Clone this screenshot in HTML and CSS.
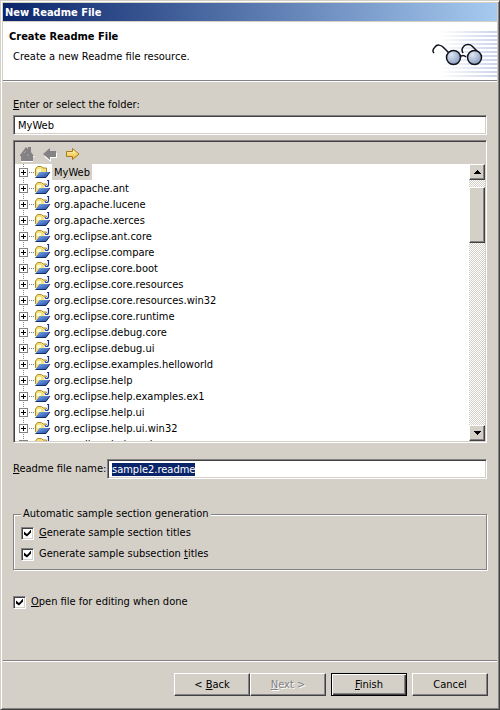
FILE: index.html
```html
<!DOCTYPE html>
<html lang="en">
<head>
<meta charset="utf-8">
<title>New Readme File</title>
<link rel="stylesheet" href="styles.css">
</head>
<body>
<svg class="defs" aria-hidden="true">
  <defs>
    <linearGradient id="blue" x2="1" y2="1">
      <stop offset="0" stop-color="#7fb0ee"/>
      <stop offset="1" stop-color="#1c4296"/>
    </linearGradient>
    <symbol id="folder" viewBox="0 0 17 16">
      <path d="M1.500 12V5l2-2.500h4L9 4h3.500v4" fill="#f5e27c" stroke="#a88d2b"/>
      <path d="M3 5h4v3H3z" fill="#fffbd0"/>
      <path d="M5.500 8H16l-4 5.500H1.500z" fill="url(#blue)"/>
      <path d="M1.500 13.500H12L16 8" fill="none" stroke="#122e70"/>
    </symbol>
    <symbol id="java" viewBox="0 0 17 16">
      <path d="M14.500 0v4.500q0 2-2 2-1.500 0-1.500-1.500" fill="none" stroke="#fff" stroke-width="3"/>
      <path d="M13 .5h2M14.500 0v4.500q0 2-2 2-1.500 0-1.500-1.500" fill="none" stroke="#1d2e94" stroke-width="1.200"/>
    </symbol>
    <radialGradient id="lens" cx=".35" cy=".3" r=".8">
      <stop offset="0" stop-color="#dfe7f3"/>
      <stop offset="1" stop-color="#8295bc"/>
    </radialGradient>
    <linearGradient id="gold" x2="0" y2="1">
      <stop offset="0" stop-color="#fffbd0"/>
      <stop offset="1" stop-color="#f2b51c"/>
    </linearGradient>
  </defs>
</svg>
<main class="window">
  <div class="titlebar">New Readme File</div>
  <header class="banner">
    <div class="banner-text">
      <h1>Create Readme File</h1>
      <p>Create a new Readme file resource.</p>
    </div>
    <svg class="glasses" viewBox="0 0 68 58" aria-hidden="true">
      <defs>
        <linearGradient id="fade"><stop offset="0" stop-color="#ccd4e8" stop-opacity="0"/><stop offset="1" stop-color="#ccd4e8"/></linearGradient>
      </defs>
      <path d="M10 9h58v2H10zM10 13h58v2H10zM10 17h58v2H10zM10 21h58v2H10zM10 25h58v2H10zM10 29h58v2H10zM10 33h58v2H10zM10 37h58v2H10zM10 41h58v2H10zM10 45h58v2H10zM10 49h58v2H10zM10 53h58v2H10z" fill="url(#fade)"/>
      <g fill="none" stroke="#10131c" stroke-width="1.500">
        <path d="M5 31c-2-2-1-4 1-6 2-3 6-2 8 0l6 6M34 31c-2-3-1-5 1-7 2-2 6-2 8 0l5 5M31 35q3-3 6 0"/>
        <circle cx="24.500" cy="35.500" r="7" fill="url(#lens)"/>
        <circle cx="45.500" cy="35.500" r="7" fill="url(#lens)"/>
      </g>
    </svg>
  </header>
  <form class="content">
    <label class="folder-label" for="folder-name"><u>E</u>nter or select the folder:</label>
    <input class="field" id="folder-name" type="text" value="MyWeb">
    <section class="browser" aria-label="Folders">
      <div class="toolbar">
        <button type="button" aria-label="Home" disabled><svg viewBox="0 0 16 16"><path d="M2 10v6h12v-5h2L11 5V2" fill="#fff"/><path d="M1 9l6-8 2 2V1h3v5l3 4h-1v5H2v-5H1z" fill="#848284"/><path d="M5 7l2-2M8 9h2" fill="none" stroke="#aaa8a5"/></svg></button>
        <button type="button" aria-label="Back" disabled><svg viewBox="0 0 16 16"><path d="M3 10l5 4v-3h6V7" fill="none" stroke="#fff" stroke-width="2"/><path d="M1 8l7-6v3h6v6H8v3z" fill="#848284"/></svg></button>
        <button type="button" aria-label="Go into"><svg viewBox="0 0 16 16"><path d="M1.500 5.500h6v-3L14 8l-6.500 5.500v-3h-6z" fill="url(#gold)" stroke="#a67c16"/></svg></button>
      </div>
      <div class="tree-pane">
        <ul class="tree">
          <li class="selected"><button type="button" aria-label="Expand"></button><svg viewBox="0 0 17 16"><use href="#folder"/></svg><span>MyWeb</span></li>
          <li><button type="button" aria-label="Expand"></button><svg viewBox="0 0 17 16"><use href="#folder"/><use href="#java"/></svg><span>org.apache.ant</span></li>
          <li><button type="button" aria-label="Expand"></button><svg viewBox="0 0 17 16"><use href="#folder"/><use href="#java"/></svg><span>org.apache.lucene</span></li>
          <li><button type="button" aria-label="Expand"></button><svg viewBox="0 0 17 16"><use href="#folder"/><use href="#java"/></svg><span>org.apache.xerces</span></li>
          <li><button type="button" aria-label="Expand"></button><svg viewBox="0 0 17 16"><use href="#folder"/><use href="#java"/></svg><span>org.eclipse.ant.core</span></li>
          <li><button type="button" aria-label="Expand"></button><svg viewBox="0 0 17 16"><use href="#folder"/><use href="#java"/></svg><span>org.eclipse.compare</span></li>
          <li><button type="button" aria-label="Expand"></button><svg viewBox="0 0 17 16"><use href="#folder"/><use href="#java"/></svg><span>org.eclipse.core.boot</span></li>
          <li><button type="button" aria-label="Expand"></button><svg viewBox="0 0 17 16"><use href="#folder"/><use href="#java"/></svg><span>org.eclipse.core.resources</span></li>
          <li><button type="button" aria-label="Expand"></button><svg viewBox="0 0 17 16"><use href="#folder"/><use href="#java"/></svg><span>org.eclipse.core.resources.win32</span></li>
          <li><button type="button" aria-label="Expand"></button><svg viewBox="0 0 17 16"><use href="#folder"/><use href="#java"/></svg><span>org.eclipse.core.runtime</span></li>
          <li><button type="button" aria-label="Expand"></button><svg viewBox="0 0 17 16"><use href="#folder"/><use href="#java"/></svg><span>org.eclipse.debug.core</span></li>
          <li><button type="button" aria-label="Expand"></button><svg viewBox="0 0 17 16"><use href="#folder"/><use href="#java"/></svg><span>org.eclipse.debug.ui</span></li>
          <li><button type="button" aria-label="Expand"></button><svg viewBox="0 0 17 16"><use href="#folder"/><use href="#java"/></svg><span>org.eclipse.examples.helloworld</span></li>
          <li><button type="button" aria-label="Expand"></button><svg viewBox="0 0 17 16"><use href="#folder"/><use href="#java"/></svg><span>org.eclipse.help</span></li>
          <li><button type="button" aria-label="Expand"></button><svg viewBox="0 0 17 16"><use href="#folder"/><use href="#java"/></svg><span>org.eclipse.help.examples.ex1</span></li>
          <li><button type="button" aria-label="Expand"></button><svg viewBox="0 0 17 16"><use href="#folder"/><use href="#java"/></svg><span>org.eclipse.help.ui</span></li>
          <li><button type="button" aria-label="Expand"></button><svg viewBox="0 0 17 16"><use href="#folder"/><use href="#java"/></svg><span>org.eclipse.help.ui.win32</span></li>
          <li><button type="button" aria-label="Expand"></button><svg viewBox="0 0 17 16"><use href="#folder"/><use href="#java"/></svg><span>org.eclipse.help.webapp</span></li>
        </ul>
        <div class="scrollbar">
          <button type="button" class="raised" aria-label="Scroll up"><svg viewBox="0 0 7 4" shape-rendering="crispEdges"><path d="M3 0h1v1h1v1h1v1h1v1H0V3h1V2h1V1h1z"/></svg></button>
          <div class="track"><div class="thumb raised"></div></div>
          <button type="button" class="raised" aria-label="Scroll down"><svg viewBox="0 0 7 4" shape-rendering="crispEdges"><path d="M0 0h7v1H6v1H5v1H4v1H3V3H2V2H1V1H0z"/></svg></button>
        </div>
      </div>
    </section>
    <div class="file-row">
      <label for="file-name"><u>R</u>eadme file name:</label>
      <input class="field" id="file-name" type="text" value="sample2.readme" autofocus>
    </div>
    <fieldset>
      <legend>Automatic sample section generation</legend>
      <label class="check"><input type="checkbox" checked><span><u>G</u>enerate sample section titles</span></label>
      <label class="check"><input type="checkbox" checked><span>Generate sample subsection <u>t</u>itles</span></label>
    </fieldset>
    <label class="check"><input type="checkbox" checked><span><u>O</u>pen file for editing when done</span></label>
  </form>
  <footer class="actions">
    <div class="pair">
      <button type="button" class="raised">&lt; <u>B</u>ack</button>
      <button type="button" class="raised" disabled><u>N</u>ext &gt;</button>
    </div>
    <button type="button" class="raised default"><u>F</u>inish</button>
    <button type="button" class="raised">Cancel</button>
  </footer>
</main>
<script src="script.js"></script>
</body>
</html>
```
FILE: styles.css
```css
* { box-sizing: border-box; }

:root {
  --face: #d4d0c8;
  --shadow: #848284;
  --dark: #424142;
  --navy: #0a246a;
}

body {
  margin: 0;
  font: 11px/14px "DejaVu Sans Condensed", "DejaVu Sans", sans-serif;
  font-stretch: condensed;
  color: #000;
}

button, input { font: inherit; color: inherit; }
u { text-underline-offset: 1px; }
.defs { position: absolute; width: 0; height: 0; }

.window {
  display: flex;
  flex-direction: column;
  min-height: 100vh;
  padding: 1px;
  background: var(--face);
  border: 1px solid var(--face);
  border-right: 1px solid var(--dark);
  border-bottom: 1px solid var(--dark);
  box-shadow: inset 1px 1px #fff, inset -1px -1px var(--shadow);
}

.titlebar {
  margin: 1px 1px 0;
  padding: 1px 2px 0;
  height: 18px;
  line-height: 18px;
  font-weight: bold;
  color: #fff;
  background: linear-gradient(90deg, #0a246a, #a6caf0);
}

.banner {
  display: flex;
  justify-content: space-between;
  margin: 1px 1px 0;
  background: #fff;
  border-bottom: 1px solid var(--shadow);
  box-shadow: 0 1px #fff;
}
.banner-text { padding: 8px 6px; }
.banner h1 { margin: 0; font-size: 11px; line-height: 14px; }
.banner p { margin: 6px 4px; }
.glasses { width: 68px; height: 58px; }

.content {
  display: flex;
  flex-direction: column;
  align-items: stretch;
  padding: 17px 11px 0 11px;
}
.folder-label { margin-bottom: 3px; }

.field {
  width: 100%;
  height: 20px;
  padding: 0 4px;
  background: #fff;
  border: 1px solid;
  border-color: var(--shadow) #fff #fff var(--shadow);
  border-radius: 0;
  outline: none;
  box-shadow: inset 1px 1px var(--dark), inset -1px -1px var(--face);
}
.field::selection { color: #fff; background: var(--navy); }

.browser {
  margin-top: 5px;
  padding: 1px;
  border: 1px solid;
  border-color: var(--shadow) #fff #fff var(--shadow);
  box-shadow: inset 1px 1px var(--dark), inset -1px -1px var(--face);
}
.toolbar { display: flex; gap: 7px; padding: 4px 4px 2px; }
.toolbar button { width: 16px; height: 16px; padding: 0; border: 0; background: none; }
.toolbar svg { display: block; width: 16px; height: 16px; }

.tree-pane { display: flex; height: 277px; overflow: hidden; background: #fff; }
.tree { flex: 1; margin: 0; padding: 0; list-style: none; }
.tree li {
  display: flex;
  align-items: center;
  height: 16px;
  padding-left: 4px;
  background: repeating-linear-gradient(var(--shadow) 0 1px, #fff 1px 2px) 8px 0 / 1px 16px no-repeat;
}
.tree button {
  width: 9px;
  height: 9px;
  padding: 0;
  border: 1px solid var(--shadow);
  background:
    linear-gradient(#000, #000) center / 5px 1px no-repeat,
    linear-gradient(#000, #000) center / 1px 5px no-repeat,
    #fff;
}
.tree svg {
  width: 23px;
  height: 16px;
  padding-left: 6px;
  background: repeating-linear-gradient(90deg, #fff 0 1px, var(--shadow) 1px 2px) 0 8px / 6px 1px no-repeat;
}
.tree span { margin-left: 1px; padding: 1px 2px 0; line-height: 15px; }
.tree .selected span { background: var(--face); }

.raised {
  background: var(--face);
  border: 1px solid;
  border-color: #fff var(--dark) var(--dark) #fff;
  border-radius: 0;
  box-shadow: inset -1px -1px var(--shadow);
}
.scrollbar { display: flex; flex-direction: column; width: 16px; }
.scrollbar button { display: grid; place-items: center; width: 16px; height: 16px; padding: 0; }
.scrollbar svg { width: 7px; height: 4px; }
.track {
  flex: 1;
  padding-top: 7px;
  background: repeating-conic-gradient(#fff 0 25%, var(--face) 0 50%) 0 0 / 2px 2px;
}
.thumb { height: 56px; }

.file-row { display: flex; align-items: center; gap: 5px; margin-top: 16px; }
.file-row label { flex: none; width: 89px; white-space: nowrap; }
.file-row .field { flex: 1; min-width: 0; }

fieldset {
  min-width: 0;
  margin: 28px 0 25px;
  padding: 5px 7px 8px;
  border: 1px solid var(--shadow);
  box-shadow: 1px 1px #fff, inset 1px 1px #fff;
}
legend { padding: 0 2px; background: var(--face); }

.check { display: flex; align-items: center; gap: 5px; }
.check + .check { margin-top: 7px; }
.check input {
  appearance: none;
  width: 13px;
  height: 13px;
  margin: 0;
  background: #fff;
  border: 1px solid;
  border-color: var(--shadow) #fff #fff var(--shadow);
  box-shadow: inset 1px 1px var(--dark), inset -1px -1px var(--face);
}
.check input:checked::before {
  content: "";
  display: block;
  width: 7px;
  height: 7px;
  margin: 2px;
  background: #000;
  clip-path: polygon(0 29%, 43% 64%, 100% 0, 100% 43%, 43% 100%, 0 71%);
}

.actions {
  display: flex;
  justify-content: flex-end;
  gap: 5px;
  margin: auto 1px 0;
  padding: 12px 9px 12px;
  border-top: 1px solid var(--shadow);
  box-shadow: inset 0 1px #fff;
}
.pair { display: flex; }
.actions button { width: 76px; height: 23px; padding: 0; }
.actions button:disabled { color: var(--shadow); text-shadow: 1px 1px #fff; }
.actions .default {
  border-color: #000;
  box-shadow: inset 1px 1px #fff, inset -1px -1px var(--dark), inset -2px -2px var(--shadow);
}
```
FILE: script.js
```js
const fileName = document.getElementById("file-name");
fileName.focus();
fileName.select();
```
